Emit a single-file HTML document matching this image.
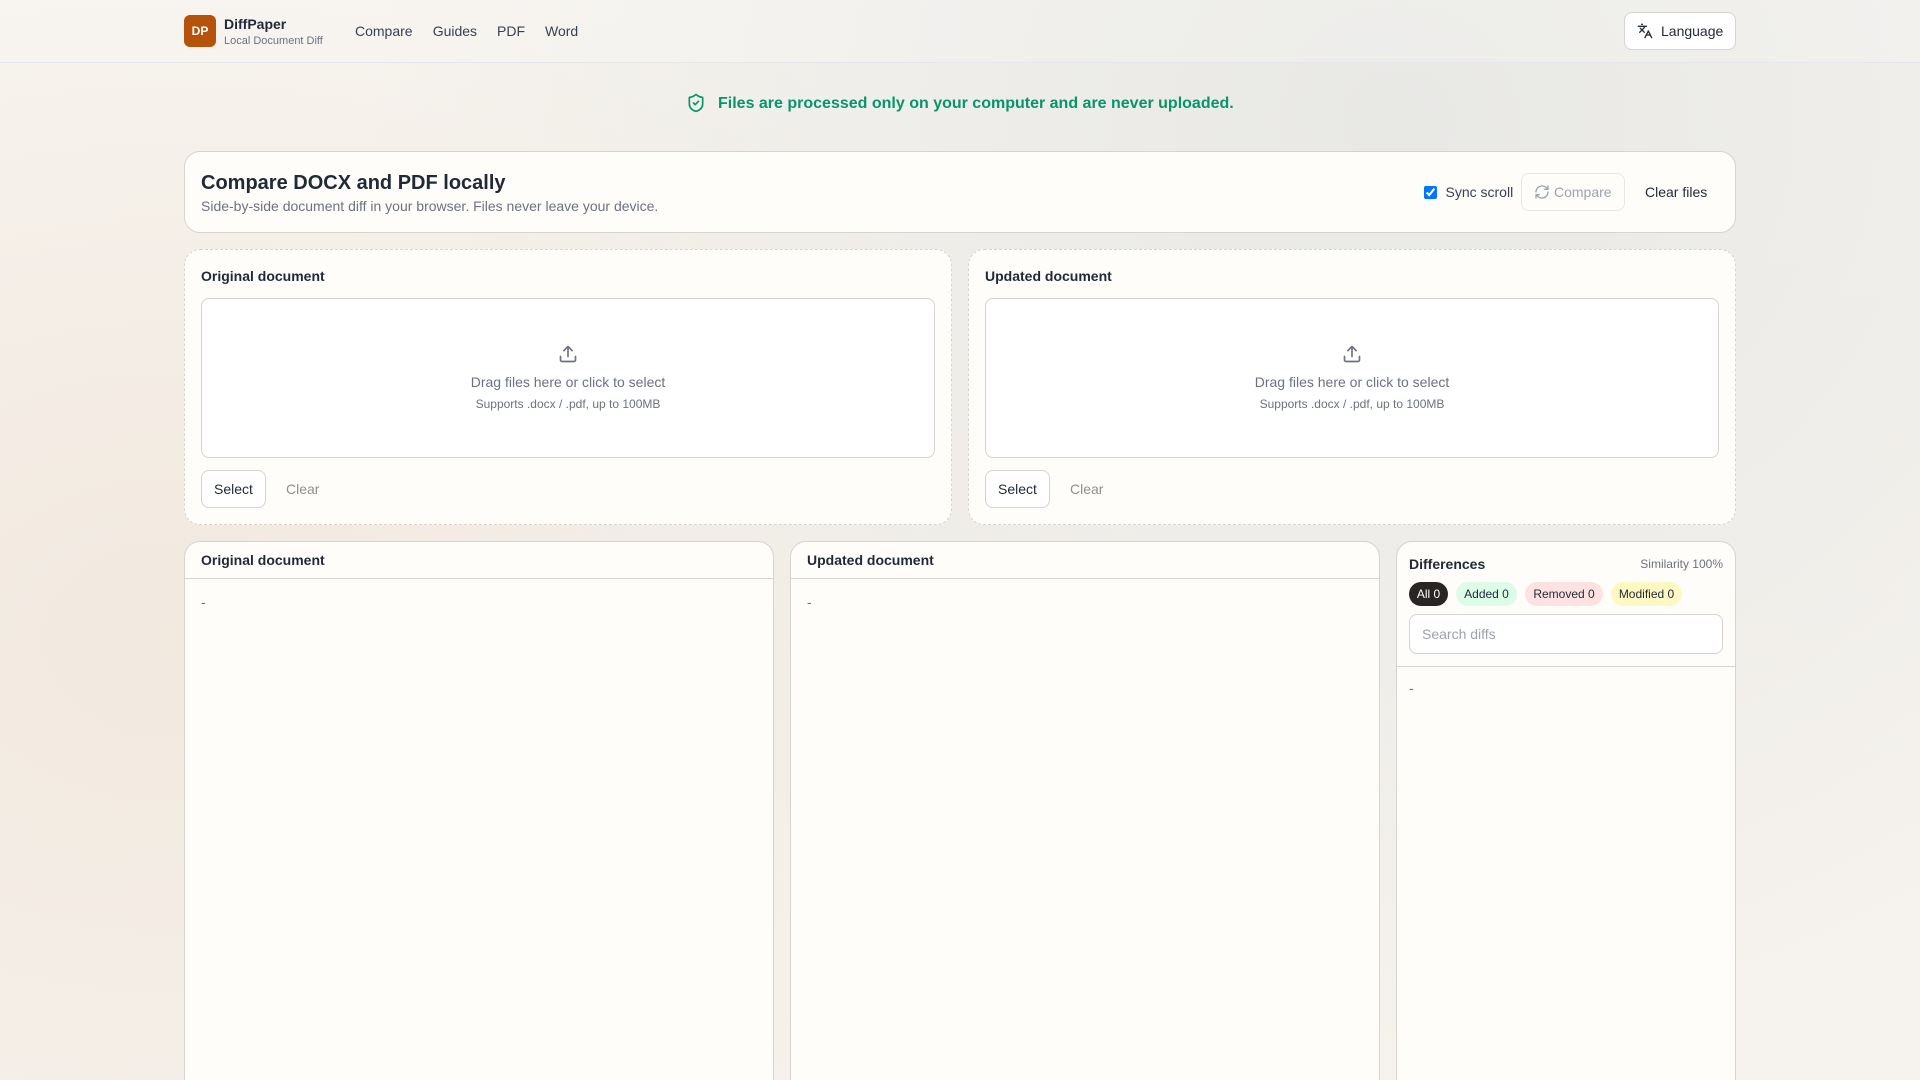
<!DOCTYPE html>
<html lang="en"><head><meta charset="utf-8"><title>DiffPaper</title>
<style>
*{box-sizing:border-box;margin:0;padding:0}
html,body{width:1920px;height:1080px;overflow:hidden}
body{font-family:"Liberation Sans",Arial,sans-serif;position:relative;color:#1f2937;background:
radial-gradient(ellipse 1050px 960px at 1400px 120px,#e8e8e5 0%,rgba(232,232,229,0) 100%),
radial-gradient(ellipse 1000px 720px at 180px 640px,#f2e9df 0%,rgba(242,233,223,0) 100%),
linear-gradient(180deg,#f7f4ef 0%,#f6f2ed 100%)}
#w{position:absolute;left:0;top:0;width:1920px;height:1080px;overflow:hidden}
.a{position:absolute}
.t{position:absolute;white-space:nowrap}
.card{position:absolute;background:#fffdf9;border:1px solid #d6d3d1;border-radius:16px}
.dash{border-style:dashed}
.btn{position:absolute;height:38px;background:#fff;border:1px solid #d6d3d1;border-radius:8px;font-size:14px;line-height:36px;white-space:nowrap;color:#1f2937}
svg{position:absolute;fill:none;stroke-linecap:round;stroke-linejoin:round;stroke-width:2}
.hdr{position:absolute;left:0;top:0;width:1920px;height:63px;border-bottom:1px solid #e5e7eb;background:rgba(255,255,255,.2)}
.nav{font-size:14px;line-height:20px;top:21px;color:#374151}
.pill{position:absolute;top:582px;height:24px;border-radius:12px;font-size:12px;line-height:24px;text-align:center;color:#1f2937}
.h{font-size:14px;font-weight:700;line-height:20px}
.muted{color:#6b7280}
</style></head><body><div id="w">
<div class="hdr"></div>
<div class="a" style="left:184px;top:15px;width:32px;height:32px;border-radius:6px;background:#b45309;color:#fff;font-size:12px;font-weight:700;line-height:32px;text-align:center">DP</div>
<div class="t" style="left:224px;top:14px;font-size:14px;font-weight:700;line-height:20px;color:#1f2937">DiffPaper</div>
<div class="t muted" style="left:224px;top:33px;font-size:11px;line-height:16px">Local Document Diff</div>
<div class="t nav" style="left:355px">Compare</div>
<div class="t nav" style="left:432.7px">Guides</div>
<div class="t nav" style="left:497px">PDF</div>
<div class="t nav" style="left:545px">Word</div>
<div class="btn" style="left:1624px;top:12px;width:112px;padding-left:36px">Language</div>
<svg style="left:1637px;top:23px;stroke:#1f2937" width="16" height="16" viewBox="0 0 24 24"><path d="m5 8 6 6"/><path d="m4 14 6-6 2-3"/><path d="M2 5h12"/><path d="M7 2h1"/><path d="m22 22-5-10-5 10"/><path d="M14 18h6"/></svg>

<svg style="left:686px;top:93px;stroke:#059669" width="20" height="20" viewBox="0 0 24 24"><path d="M20 13c0 5-3.5 7.5-7.66 8.95a1 1 0 0 1-.67-.01C7.5 20.5 4 18 4 13V6a1 1 0 0 1 1-1c2 0 4.5-1.2 6.24-2.72a1.17 1.17 0 0 1 1.52 0C14.51 3.81 17 5 19 5a1 1 0 0 1 1 1z"/><path d="m9 12 2 2 4-4"/></svg>
<div class="t" style="left:718px;top:93px;font-size:16px;font-weight:700;line-height:22px;color:#059669">Files are processed only on your computer and are never uploaded.</div>

<div class="card" style="left:184px;top:151px;width:1552px;height:82px"></div>
<div class="t" style="left:201px;top:169px;font-size:20px;font-weight:700;line-height:28px;color:#1f2937">Compare DOCX and PDF locally</div>
<div class="t muted" style="left:201px;top:196px;font-size:14px;line-height:20px">Side-by-side document diff in your browser. Files never leave your device.</div>
<input class="a" type="checkbox" checked style="left:1424px;top:186px;width:13px;height:13px;margin:0">
<div class="t" style="left:1445.5px;top:182px;font-size:14px;line-height:20px;color:#374151">Sync scroll</div>
<div class="btn" style="left:1521px;top:173px;width:104px;padding-left:32px;background:#fffdf9;border-color:#e9e7e4;color:#9ca3af">Compare</div>
<svg style="left:1534px;top:184px;stroke:#9ca3af" width="16" height="16" viewBox="0 0 24 24"><path d="M3 12a9 9 0 0 1 9-9 9.75 9.75 0 0 1 6.74 2.74L21 8"/><path d="M21 3v5h-5"/><path d="M21 12a9 9 0 0 1-9 9 9.75 9.75 0 0 1-6.74-2.74L3 16"/><path d="M8 16H3v5"/></svg>
<div class="t" style="left:1645px;top:182px;font-size:14px;line-height:20px;color:#1f2937">Clear files</div>

<div class="card dash" style="left:184px;top:249px;width:768px;height:276px"></div>
<div class="t h" style="left:201px;top:266px">Original document</div>
<div class="a" style="left:201px;top:298px;width:734px;height:160px;background:#fff;border:1px solid #d6d3d1;border-radius:8px"></div>
<svg style="left:558px;top:344px;stroke:#6b7280" width="20" height="20" viewBox="0 0 24 24"><path d="M12 3v12"/><path d="m17 8-5-5-5 5"/><path d="M21 15v4a2 2 0 0 1-2 2H5a2 2 0 0 1-2-2v-4"/></svg>
<div class="t muted" style="left:201px;width:734px;text-align:center;top:372px;font-size:14px;line-height:20px">Drag files here or click to select</div>
<div class="t muted" style="left:201px;width:734px;text-align:center;top:396px;font-size:12px;line-height:16px">Supports .docx / .pdf, up to 100MB</div>
<div class="btn" style="left:201px;top:470px;width:65px;text-align:center">Select</div>
<div class="t" style="left:286px;top:479px;font-size:14px;line-height:20px;color:#8f8f8f">Clear</div>

<div class="card dash" style="left:968px;top:249px;width:768px;height:276px"></div>
<div class="t h" style="left:985px;top:266px">Updated document</div>
<div class="a" style="left:985px;top:298px;width:734px;height:160px;background:#fff;border:1px solid #d6d3d1;border-radius:8px"></div>
<svg style="left:1342px;top:344px;stroke:#6b7280" width="20" height="20" viewBox="0 0 24 24"><path d="M12 3v12"/><path d="m17 8-5-5-5 5"/><path d="M21 15v4a2 2 0 0 1-2 2H5a2 2 0 0 1-2-2v-4"/></svg>
<div class="t muted" style="left:985px;width:734px;text-align:center;top:372px;font-size:14px;line-height:20px">Drag files here or click to select</div>
<div class="t muted" style="left:985px;width:734px;text-align:center;top:396px;font-size:12px;line-height:16px">Supports .docx / .pdf, up to 100MB</div>
<div class="btn" style="left:985px;top:470px;width:65px;text-align:center">Select</div>
<div class="t" style="left:1070px;top:479px;font-size:14px;line-height:20px;color:#8f8f8f">Clear</div>

<div class="card" style="left:184px;top:541px;width:590px;height:600px"></div>
<div class="a" style="left:185px;top:578px;width:588px;height:1px;background:#d6d3d1"></div>
<div class="t h" style="left:201px;top:550px">Original document</div>
<div class="t muted" style="left:201px;top:592px;font-size:14px;line-height:20px">-</div>

<div class="card" style="left:790px;top:541px;width:590px;height:600px"></div>
<div class="a" style="left:791px;top:578px;width:588px;height:1px;background:#d6d3d1"></div>
<div class="t h" style="left:807px;top:550px">Updated document</div>
<div class="t muted" style="left:807px;top:592px;font-size:14px;line-height:20px">-</div>

<div class="card" style="left:1396px;top:541px;width:340px;height:600px"></div>
<div class="t h" style="left:1409px;top:554px">Differences</div>
<div class="t muted" style="right:197px;top:556px;font-size:12px;line-height:16px">Similarity 100%</div>
<div class="pill" style="left:1409px;width:39px;background:#292524;color:#fff">All 0</div>
<div class="pill" style="left:1456px;width:61px;background:#dcfce7">Added 0</div>
<div class="pill" style="left:1525px;width:78px;background:#fee2e2">Removed 0</div>
<div class="pill" style="left:1611px;width:71px;background:#fef9c3">Modified 0</div>
<div class="a" style="left:1409px;top:614px;width:314px;height:40px;background:#fff;border:1px solid #d6d3d1;border-radius:8px;font-size:14px;line-height:38px;padding-left:12px;color:#9ca3af">Search diffs</div>
<div class="a" style="left:1397px;top:666px;width:338px;height:1px;background:#d6d3d1"></div>
<div class="t muted" style="left:1409px;top:678px;font-size:14px;line-height:20px">-</div>
</div></body></html>
